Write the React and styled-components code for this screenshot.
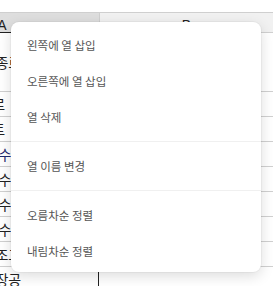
import React from 'react';
import styled, { createGlobalStyle } from 'styled-components';

const GlobalStyle = createGlobalStyle`
  html, body {
    margin: 0;
    padding: 0;
    background: #fff;
  }
  body {
    font-family: "Noto Sans CJK KR", "Noto Sans", sans-serif;
  }
`

// the sheet is scrolled sideways, so only a sliver of column A shows
const rows = [
  { a: '대한민국서울 종로구' },
  { a: '서울중구을지로' },
  { a: '한강자이아파트' },
  { a: '음악 대학 실기수석', link: true },
  { a: '공과 대학 부교수' },
  { a: '자연 과학 부교수' },
  { a: '사회 과학 부교수' },
  { a: '인문사회대학 조교' },
  { a: '시설관리본부 장공' },
];

const menuGroups = [
  ['왼쪽에 열 삽입', '오른쪽에 열 삽입', '열 삭제'],
  ['열 이름 변경'],
  ['오름차순 정렬', '내림차순 정렬'],
];

const App = () => {
  return (
    <>
      <GlobalStyle />
      <Page>
        <Sheet>
          <HeadCell selected>A</HeadCell>
          <HeadCell>B</HeadCell>
          {rows.map((row, i) => (
            <React.Fragment key={i}>
              <Cell selected link={row.link}>{row.a}</Cell>
              <Cell></Cell>
            </React.Fragment>
          ))}
        </Sheet>
        <Menu>
          {menuGroups.map((group, gi) => (
            <Group key={gi} first={gi === 0}>
              {group.map((label) => (
                <Item key={label}>{label}</Item>
              ))}
            </Group>
          ))}
        </Menu>
      </Page>
    </>
  );
}

const Page = styled.div`
  position: relative;
  width: 273px;
  height: 286px;
  overflow: hidden;
  background: #fff;
`

const Sheet = styled.div`
  display: grid;
  grid-template-columns: 194px 174px;
  grid-template-rows: 21px 59px;
  grid-auto-rows: 25px;
  margin-top: 12px;
  margin-left: -95px;
`

const HeadCell = styled.div`
  box-sizing: border-box;
  display: flex;
  align-items: flex-end;
  justify-content: center;
  font-family: "Liberation Sans", Arial, sans-serif;
  font-size: 14px;
  line-height: 14px;
  color: #222;
  background: ${p => p.selected ? '#dedede' : '#f1f1f1'};
  border-top: 1px solid #cfcfcf;
  border-bottom: 1px solid ${p => p.selected ? '#222' : '#d0d0d0'};
  border-left: ${p => p.selected ? 'none' : '1px solid #cfcfcf'};
`

const Cell = styled.div`
  box-sizing: border-box;
  padding: 0 10px;
  display: flex;
  align-items: center;
  white-space: nowrap;
  overflow: hidden;
  font-size: 14px;
  color: ${p => p.link ? '#1f2a6e' : '#222'};
  background: #fff;
  border-bottom: 1px solid #d0d0d0;
  border-right: ${p => p.selected ? '1px solid #222' : 'none'};
`

const Menu = styled.div`
  position: absolute;
  top: 22px;
  left: 11px;
  width: 250px;
  box-sizing: border-box;
  padding: 5px 0 3px;
  background: #fff;
  border-radius: 8px;
  box-shadow: 0 4px 14px rgba(0, 0, 0, 0.14), 0 0 0 1px rgba(0, 0, 0, 0.03);
`

const Group = styled.div`
  display: flex;
  flex-direction: column;
  ${p => !p.first && `
    border-top: 1px solid #f0f0f0;
    margin-top: 6px;
    padding-top: 6px;
  `}
`

const Item = styled.div`
  height: 36px;
  display: flex;
  align-items: center;
  padding: 0 16px;
  font-size: 11.5px;
  color: #555;
  cursor: pointer;
`

export default App;
